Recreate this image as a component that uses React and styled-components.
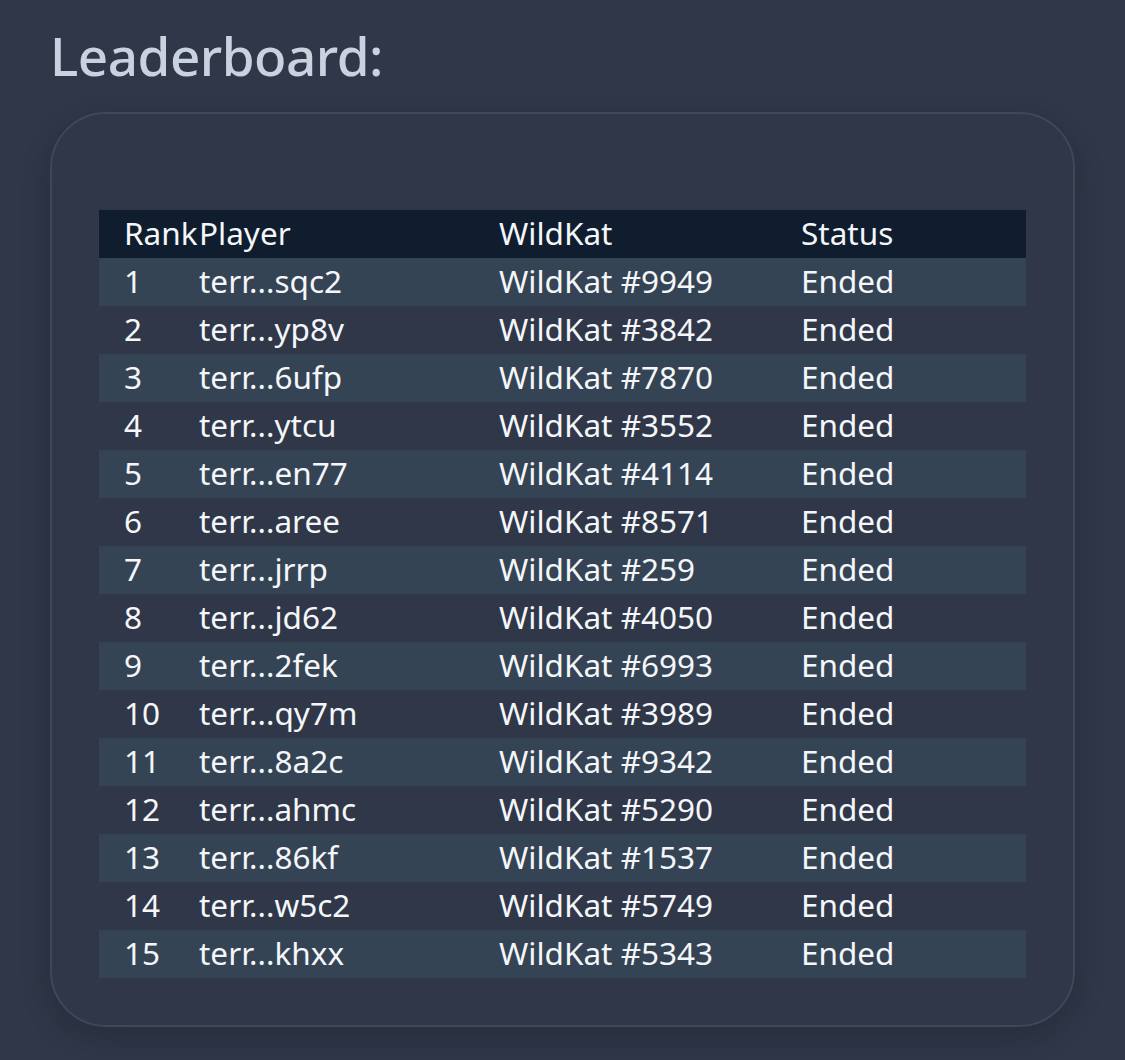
import React from 'react';
import styled, { createGlobalStyle } from 'styled-components';

const GlobalStyle = createGlobalStyle`
  html, body {
    margin: 0;
    padding: 0;
    background: #2f3748;
  }
  body {
    font-family: "Noto Sans", "Open Sans", sans-serif;
  }
`;

const Page = styled.div`
  min-height: 1060px;
  padding: 21px 50px 0 50px;
  box-sizing: border-box;
`;

const Title = styled.h1`
  margin: 0 0 21px 0;
  font-size: 53px;
  font-weight: 500;
  line-height: 70px;
  color: #c9d2df;
  letter-spacing: -0.5px;
`;

const Card = styled.div`
  width: 1025px;
  box-sizing: border-box;
  padding: 96px 47px 47px 47px;
  border: 2px solid #3e4859;
  border-radius: 56px;
  background: #2f3748;
  box-shadow: 0 10px 30px rgba(0, 0, 0, 0.18);
`;

const Table = styled.div`
  display: grid;
  grid-template-columns: 100px 300px 302px 1fr;
`;

const Row = styled.div`
  display: contents;

  & > div {
    background: ${p => (p.$header ? '#0f1d2e' : p.$odd ? '#344454' : 'transparent')};
  }
`;

const Cell = styled.div`
  height: 48px;
  line-height: 46px;
  font-size: 31.5px;
  color: #f4f6f9;
  white-space: nowrap;
  padding-left: ${p => (p.$first ? '25px' : '0')};
`;

const data = [
  ['1', 'terr...sqc2', 'WildKat #9949'],
  ['2', 'terr...yp8v', 'WildKat #3842'],
  ['3', 'terr...6ufp', 'WildKat #7870'],
  ['4', 'terr...ytcu', 'WildKat #3552'],
  ['5', 'terr...en77', 'WildKat #4114'],
  ['6', 'terr...aree', 'WildKat #8571'],
  ['7', 'terr...jrrp', 'WildKat #259'],
  ['8', 'terr...jd62', 'WildKat #4050'],
  ['9', 'terr...2fek', 'WildKat #6993'],
  ['10', 'terr...qy7m', 'WildKat #3989'],
  ['11', 'terr...8a2c', 'WildKat #9342'],
  ['12', 'terr...ahmc', 'WildKat #5290'],
  ['13', 'terr...86kf', 'WildKat #1537'],
  ['14', 'terr...w5c2', 'WildKat #5749'],
  ['15', 'terr...khxx', 'WildKat #5343'],
];

export default function App() {
  return (
    <>
      <GlobalStyle />
      <Page>
        <Title>Leaderboard:</Title>
        <Card>
          <Table>
            <Row $header>
              <Cell $first>Rank</Cell>
              <Cell>Player</Cell>
              <Cell>WildKat</Cell>
              <Cell>Status</Cell>
            </Row>
            {data.map(([rank, player, kat], i) => (
              <Row key={rank} $odd={i % 2 === 0}>
                <Cell $first>{rank}</Cell>
                <Cell>{player}</Cell>
                <Cell>{kat}</Cell>
                <Cell>Ended</Cell>
              </Row>
            ))}
          </Table>
        </Card>
      </Page>
    </>
  );
}
